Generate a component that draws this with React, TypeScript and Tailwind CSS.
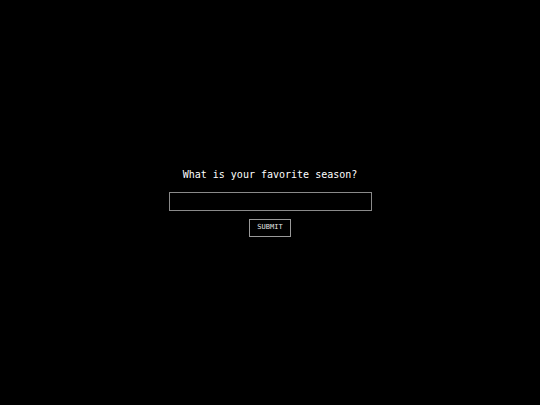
export default function App() {
  return (
    <div className="h-[405px] w-full bg-black flex flex-col items-center justify-center font-['DejaVu_Sans_Mono',monospace]">
      <div className="text-[10px] leading-[12px] text-white mb-[11px]">What is your favorite season?</div>
      <input className="w-[203px] h-[19px] border border-[#8a8a8a] bg-black text-white outline-none text-[10px] px-1 font-['DejaVu_Sans_Mono',monospace]" />
      <button className="mt-[8px] w-[42px] h-[18px] border border-[#9a9a9a] bg-black text-[#e5e5e5] text-[7px] leading-none font-['DejaVu_Sans_Mono',monospace]">SUBMIT</button>
    </div>
  );
}
